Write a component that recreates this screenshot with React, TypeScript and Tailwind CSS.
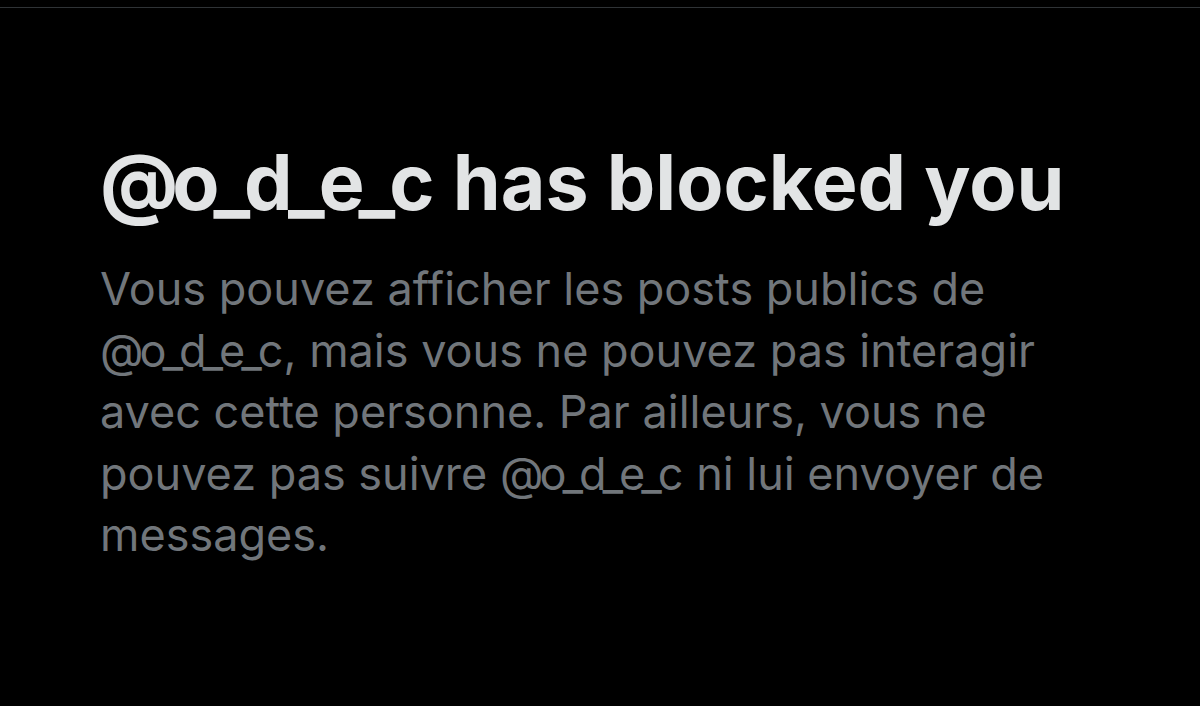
export default function App() {
  const handle = <span className="mr-[4px] tracking-[-4px]">@o_d_e_c</span>;
  return (
    <div className="min-h-[706px] w-full bg-black pt-[7px]" style={{ fontFamily: "Inter, 'Noto Sans', sans-serif" }}>
      <div className="h-px w-full bg-[#2f3336]" />
      <div className="pl-[100px] pt-[132px]">
        <h1 className="text-[77px] font-bold leading-[84px] tracking-[0px] text-[#e2e4e5] whitespace-nowrap">
          <span className="mr-[6px] tracking-[-6px]">@o_d_e_c</span> has blocked you
        </h1>
        <p className="mt-[34px] w-[1080px] text-[45px] leading-[61.6px] tracking-[0px] text-[#71767b]">
          Vous pouvez afficher les posts publics de
          <br />
          {handle}, mais vous ne pouvez pas interagir
          <br />
          avec cette personne. Par ailleurs, vous ne
          <br />
          pouvez pas suivre {handle} ni lui envoyer de
          <br />
          messages.
        </p>
      </div>
    </div>
  );
}
